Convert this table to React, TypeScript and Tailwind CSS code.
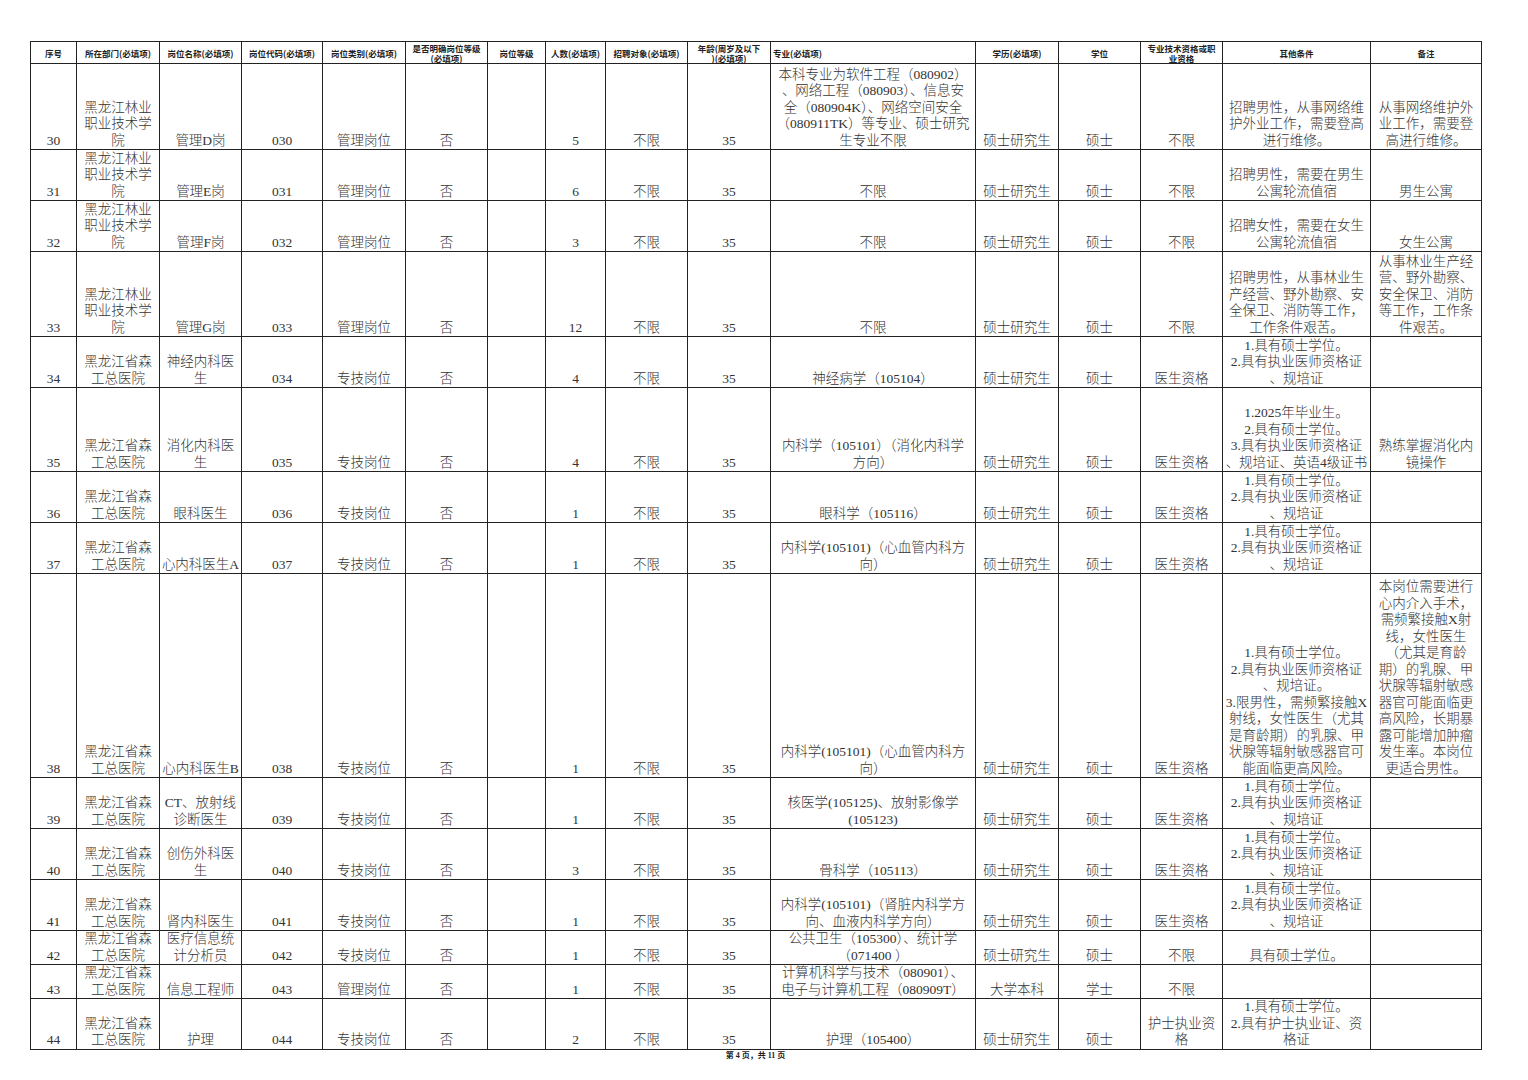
type Row = { h: string; cells: string[] }

const headers = [
  '序号',
  '所在部门(必填项)',
  '岗位名称(必填项)',
  '岗位代码(必填项)',
  '岗位类别(必填项)',
  '是否明确岗位等级\n(必填项)',
  '岗位等级',
  '人数(必填项)',
  '招聘对象(必填项)',
  '年龄(周岁及以下\n)(必填项)',
  '专业(必填项)',
  '学历(必填项)',
  '学位',
  '专业技术资格或职\n业资格',
  '其他条件',
  '备注',
]

const lin = '黑龙江林业\n职业技术学\n院'
const sen = '黑龙江省森\n工总医院'
const doc = '1.具有硕士学位。\n2.具有执业医师资格证\n、规培证'

const rows: Row[] = [
  {
    h: 'h-[86px]',
    cells: ['30', lin, '管理D岗', '030', '管理岗位', '否', '', '5', '不限', '35',
      '本科专业为软件工程（080902）\n、网络工程（080903）、信息安\n全（080904K）、网络空间安全\n（080911TK）等专业、硕士研究\n生专业不限',
      '硕士研究生', '硕士', '不限',
      '招聘男性，从事网络维\n护外业工作，需要登高\n进行维修。',
      '从事网络维护外\n业工作，需要登\n高进行维修。'],
  },
  {
    h: 'h-[51px]',
    cells: ['31', lin, '管理E岗', '031', '管理岗位', '否', '', '6', '不限', '35', '不限',
      '硕士研究生', '硕士', '不限', '招聘男性，需要在男生\n公寓轮流值宿', '男生公寓'],
  },
  {
    h: 'h-[51px]',
    cells: ['32', lin, '管理F岗', '032', '管理岗位', '否', '', '3', '不限', '35', '不限',
      '硕士研究生', '硕士', '不限', '招聘女性，需要在女生\n公寓轮流值宿', '女生公寓'],
  },
  {
    h: 'h-[85px]',
    cells: ['33', lin, '管理G岗', '033', '管理岗位', '否', '', '12', '不限', '35', '不限',
      '硕士研究生', '硕士', '不限',
      '招聘男性，从事林业生\n产经营、野外勘察、安\n全保卫、消防等工作，\n工作条件艰苦。',
      '从事林业生产经\n营、野外勘察、\n安全保卫、消防\n等工作，工作条\n件艰苦。'],
  },
  {
    h: 'h-[51px]',
    cells: ['34', sen, '神经内科医\n生', '034', '专技岗位', '否', '', '4', '不限', '35',
      '神经病学（105104）', '硕士研究生', '硕士', '医生资格', doc, ''],
  },
  {
    h: 'h-[84px]',
    cells: ['35', sen, '消化内科医\n生', '035', '专技岗位', '否', '', '4', '不限', '35',
      '内科学（105101）（消化内科学\n方向）', '硕士研究生', '硕士', '医生资格',
      '1.2025年毕业生。\n2.具有硕士学位。\n3.具有执业医师资格证\n、规培证、英语4级证书',
      '熟练掌握消化内\n镜操作'],
  },
  {
    h: 'h-[51px]',
    cells: ['36', sen, '眼科医生', '036', '专技岗位', '否', '', '1', '不限', '35',
      '眼科学（105116）', '硕士研究生', '硕士', '医生资格', doc, ''],
  },
  {
    h: 'h-[51px]',
    cells: ['37', sen, '心内科医生A', '037', '专技岗位', '否', '', '1', '不限', '35',
      '内科学(105101)（心血管内科方\n向）', '硕士研究生', '硕士', '医生资格', doc, ''],
  },
  {
    h: 'h-[204px]',
    cells: ['38', sen, '心内科医生B', '038', '专技岗位', '否', '', '1', '不限', '35',
      '内科学(105101)（心血管内科方\n向）', '硕士研究生', '硕士', '医生资格',
      '1.具有硕士学位。\n2.具有执业医师资格证\n、规培证。\n3.限男性，需频繁接触X\n射线，女性医生（尤其\n是育龄期）的乳腺、甲\n状腺等辐射敏感器官可\n能面临更高风险。',
      '本岗位需要进行\n心内介入手术，\n需频繁接触X射\n线，女性医生\n（尤其是育龄\n期）的乳腺、甲\n状腺等辐射敏感\n器官可能面临更\n高风险，长期暴\n露可能增加肿瘤\n发生率。本岗位\n更适合男性。'],
  },
  {
    h: 'h-[51px]',
    cells: ['39', sen, 'CT、放射线\n诊断医生', '039', '专技岗位', '否', '', '1', '不限', '35',
      '核医学(105125)、放射影像学\n(105123)', '硕士研究生', '硕士', '医生资格', doc, ''],
  },
  {
    h: 'h-[51px]',
    cells: ['40', sen, '创伤外科医\n生', '040', '专技岗位', '否', '', '3', '不限', '35',
      '骨科学（105113）', '硕士研究生', '硕士', '医生资格', doc, ''],
  },
  {
    h: 'h-[51px]',
    cells: ['41', sen, '肾内科医生', '041', '专技岗位', '否', '', '1', '不限', '35',
      '内科学(105101)（肾脏内科学方\n向、血液内科学方向）', '硕士研究生', '硕士', '医生资格', doc, ''],
  },
  {
    h: 'h-[34px]',
    cells: ['42', sen, '医疗信息统\n计分析员', '042', '专技岗位', '否', '', '1', '不限', '35',
      '公共卫生（105300）、统计学\n（071400 ）', '硕士研究生', '硕士', '不限', '具有硕士学位。', ''],
  },
  {
    h: 'h-[34px]',
    cells: ['43', sen, '信息工程师', '043', '管理岗位', '否', '', '1', '不限', '35',
      '计算机科学与技术（080901）、\n电子与计算机工程（080909T）', '大学本科', '学士', '不限', '', ''],
  },
  {
    h: 'h-[50px]',
    cells: ['44', sen, '护理', '044', '专技岗位', '否', '', '2', '不限', '35',
      '护理（105400）', '硕士研究生', '硕士', '护士执业资\n格',
      '1.具有硕士学位。\n2.具有护士执业证、资\n格证', ''],
  },
]

export default function App() {
  return (
    <div className="min-h-[1080px] w-[1528px] bg-white pl-[30px] pt-[41px] font-['Liberation_Serif','Noto_Sans_CJK_SC',serif] text-[#333]">
      <table className="w-[1451px] table-fixed border-collapse border border-[#111]">
        <colgroup>
          <col className="w-[46px]" />
          <col className="w-[83px]" />
          <col className="w-[82px]" />
          <col className="w-[81px]" />
          <col className="w-[83px]" />
          <col className="w-[82px]" />
          <col className="w-[58px]" />
          <col className="w-[60px]" />
          <col className="w-[82px]" />
          <col className="w-[83px]" />
          <col className="w-[205px]" />
          <col className="w-[83px]" />
          <col className="w-[82px]" />
          <col className="w-[82px]" />
          <col className="w-[148px]" />
          <col className="w-[111px]" />
        </colgroup>
        <thead>
          <tr className="h-[22px]">
            {headers.map((t, i) => (
              <th
                key={i}
                className={`border border-[#222] px-[2px] align-middle whitespace-pre font-['Noto_Sans_CJK_SC',sans-serif] text-[8.5px] leading-[10px] font-bold text-[#222] ${
                  i === 10 ? 'text-left' : 'text-center'
                }`}
              >
                {t}
              </th>
            ))}
          </tr>
        </thead>
        <tbody>
          {rows.map((r) => (
            <tr key={r.cells[0]} className={r.h}>
              {r.cells.map((c, i) => (
                <td
                  key={i}
                  className="border border-[#222] p-0 text-center align-bottom whitespace-pre text-[13.5px] leading-[16.5px] font-light"
                >
                  {c}
                </td>
              ))}
            </tr>
          ))}
        </tbody>
      </table>
      <div className="w-[1451px] pt-[1px] text-center font-['Liberation_Serif','Noto_Sans_CJK_SC',serif] text-[8px] leading-[10px] font-bold text-[#222]">
        第 4 页，共 11 页
      </div>
    </div>
  )
}
